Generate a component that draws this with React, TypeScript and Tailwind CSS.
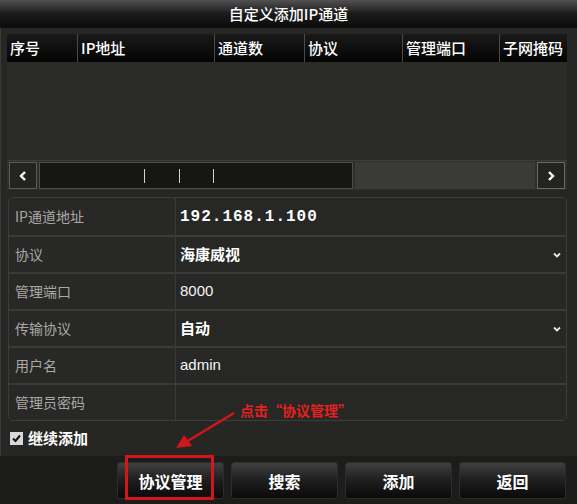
import React from 'react';

const cjk = { fontFamily: '"Noto Sans CJK SC", "Noto Sans", sans-serif' };

const columns = [
  { label: '序号', w: 'w-[71px]' },
  { label: 'IP地址', w: 'w-[137px]' },
  { label: '通道数', w: 'w-[90px]' },
  { label: '协议', w: 'w-[98px]' },
  { label: '管理端口', w: 'w-[97px]' },
  { label: '子网掩码', w: 'flex-1' },
];

function Chevron() {
  return (
    <svg width="10" height="8" viewBox="0 0 10 8" className="text-gray-200">
      <path d="M2 2.5 L5 5.5 L8 2.5" stroke="currentColor" strokeWidth="1.8" fill="none" />
    </svg>
  );
}

const rows = [
  { label: 'IP通道地址', value: <span className="font-bold tracking-[1px] text-[16px] text-white" style={{ fontFamily: '"Liberation Mono", monospace' }}>192.168.1.100</span> },
  { label: '协议', value: <span className="font-bold text-[15px] text-white">海康威视</span>, select: true },
  { label: '管理端口', value: <span className="text-[15px] text-gray-100" style={{ fontFamily: '"Liberation Sans", sans-serif' }}>8000</span> },
  { label: '传输协议', value: <span className="font-bold text-[15px] text-white">自动</span>, select: true },
  { label: '用户名', value: <span className="text-[15px] text-gray-100" style={{ fontFamily: '"Liberation Sans", sans-serif' }}>admin</span> },
  { label: '管理员密码', value: null },
];

const buttons = ['协议管理', '搜索', '添加', '返回'];

export default function App() {
  return (
    <div className="relative w-[577px] h-[504px] overflow-hidden bg-[#262624] flex flex-col" style={cjk}>
      {/* title bar */}
      <div className="h-[28px] shrink-0 flex items-center justify-center bg-gradient-to-b from-[#525252] via-[#1c1c1c] to-[#0c0c0c] border-b border-[#111]">
        <span className="text-white text-[15px] font-medium leading-none">自定义添加IP通道</span>
      </div>

      <div className="flex-1 flex flex-col pl-[6px] pr-[10px] pt-[6px] border-l border-[#3a3a38]">
        {/* list header */}
        <div className="h-[28px] flex bg-gradient-to-b from-[#1a1a1a] to-[#050505] text-white text-[15px] font-medium">
          {columns.map((c, i) => (
            <div key={i} className={`${c.w} flex items-center pl-[3px] whitespace-nowrap overflow-hidden ${i < columns.length - 1 ? 'border-r border-[#4a4a4a]' : ''}`}>
              {c.label}
            </div>
          ))}
        </div>

        {/* list body */}
        <div className="h-[98px] bg-[#2b2b27]" />

        {/* scrollbar */}
        <div className="h-[30px] flex items-center gap-[2px] px-[2px] bg-[#2e2e2c] border-t border-[#3d3d3b]">
          <div className="w-[28px] h-[27px] border border-[#5a5a58] bg-[#232321] flex items-center justify-center">
            <svg width="10" height="12" viewBox="0 0 10 12"><path d="M7 2 L3 6 L7 10" stroke="white" strokeWidth="2.4" fill="none" /></svg>
          </div>
          <div className="w-[314px] h-[27px] border border-[#4c4c4a] bg-[#161613] flex items-center">
            <div className="w-[1px] h-[14px] bg-gray-300 ml-[104px]" />
            <div className="w-[1px] h-[14px] bg-gray-300 ml-[34px]" />
            <div className="w-[1px] h-[14px] bg-gray-300 ml-[33px]" />
          </div>
          <div className="flex-1 h-[27px] bg-[#3a3a38]" />
          <div className="w-[28px] h-[27px] border border-[#6a6a68] bg-[#232321] flex items-center justify-center">
            <svg width="10" height="12" viewBox="0 0 10 12"><path d="M3 2 L7 6 L3 10" stroke="white" strokeWidth="2.4" fill="none" /></svg>
          </div>
        </div>

        {/* form */}
        <div className="mt-[7px] ml-[1px] rounded-[5px] border border-[#3c3c3a] bg-[#262624] overflow-hidden">
          {rows.map((r, i) => (
            <div key={i} className={`h-[37px] flex ${i > 0 ? 'border-t-2 border-[#3a3a38]' : ''}`}>
              <div className="w-[167px] flex items-center pl-[6px] text-[14px] text-[#a9a9a6] border-r border-[#3a3a38] bg-[#282826]">
                {r.label}
              </div>
              <div className="flex-1 flex items-center justify-between pl-[4px] pr-[4px] bg-[#272725]">
                {r.value}
                {r.select && <Chevron />}
              </div>
            </div>
          ))}
        </div>

        {/* keep adding */}
        <div className="h-[34px] flex items-center gap-[5px] pl-[3px]">
          <div className="w-[13px] h-[13px] bg-[#d8d8d8] flex items-center justify-center">
            <svg width="11" height="11" viewBox="0 0 11 11"><path d="M2 5.5 L4.5 8 L9 2.5" stroke="#111" strokeWidth="2" fill="none" /></svg>
          </div>
          <span className="text-white font-bold text-[15px]">继续添加</span>
        </div>
      </div>

      {/* button bar */}
      <div className="h-[48px] shrink-0 bg-[#1c1c1b] flex items-start justify-end gap-[7px] pr-[11px] pt-[6px]">
        {buttons.map((b) => (
          <div key={b} className="w-[107px] h-[37px] rounded-[3px] border border-[#2c2c2c] bg-gradient-to-b from-[#404040] via-[#1e1e1e] to-[#0a0a0a] flex items-center justify-center text-white font-bold text-[16px]">
            {b}
          </div>
        ))}
      </div>

      {/* annotation overlay */}
      <div className="absolute left-[125px] top-[455px] w-[89px] h-[45px] border-[3px] border-[#d3161b]" />
      <div className="absolute left-[240px] top-[400px] text-[#e3211f] font-bold text-[14px] whitespace-nowrap">
        点击“协议管理”
      </div>
      <svg className="absolute left-0 top-0" width="577" height="504" viewBox="0 0 577 504">
        <line x1="234" y1="413" x2="186" y2="442" stroke="#d3161b" strokeWidth="2.5" />
        <polygon points="176,448 184,435 192,446" fill="#d3161b" />
      </svg>
    </div>
  );
}
